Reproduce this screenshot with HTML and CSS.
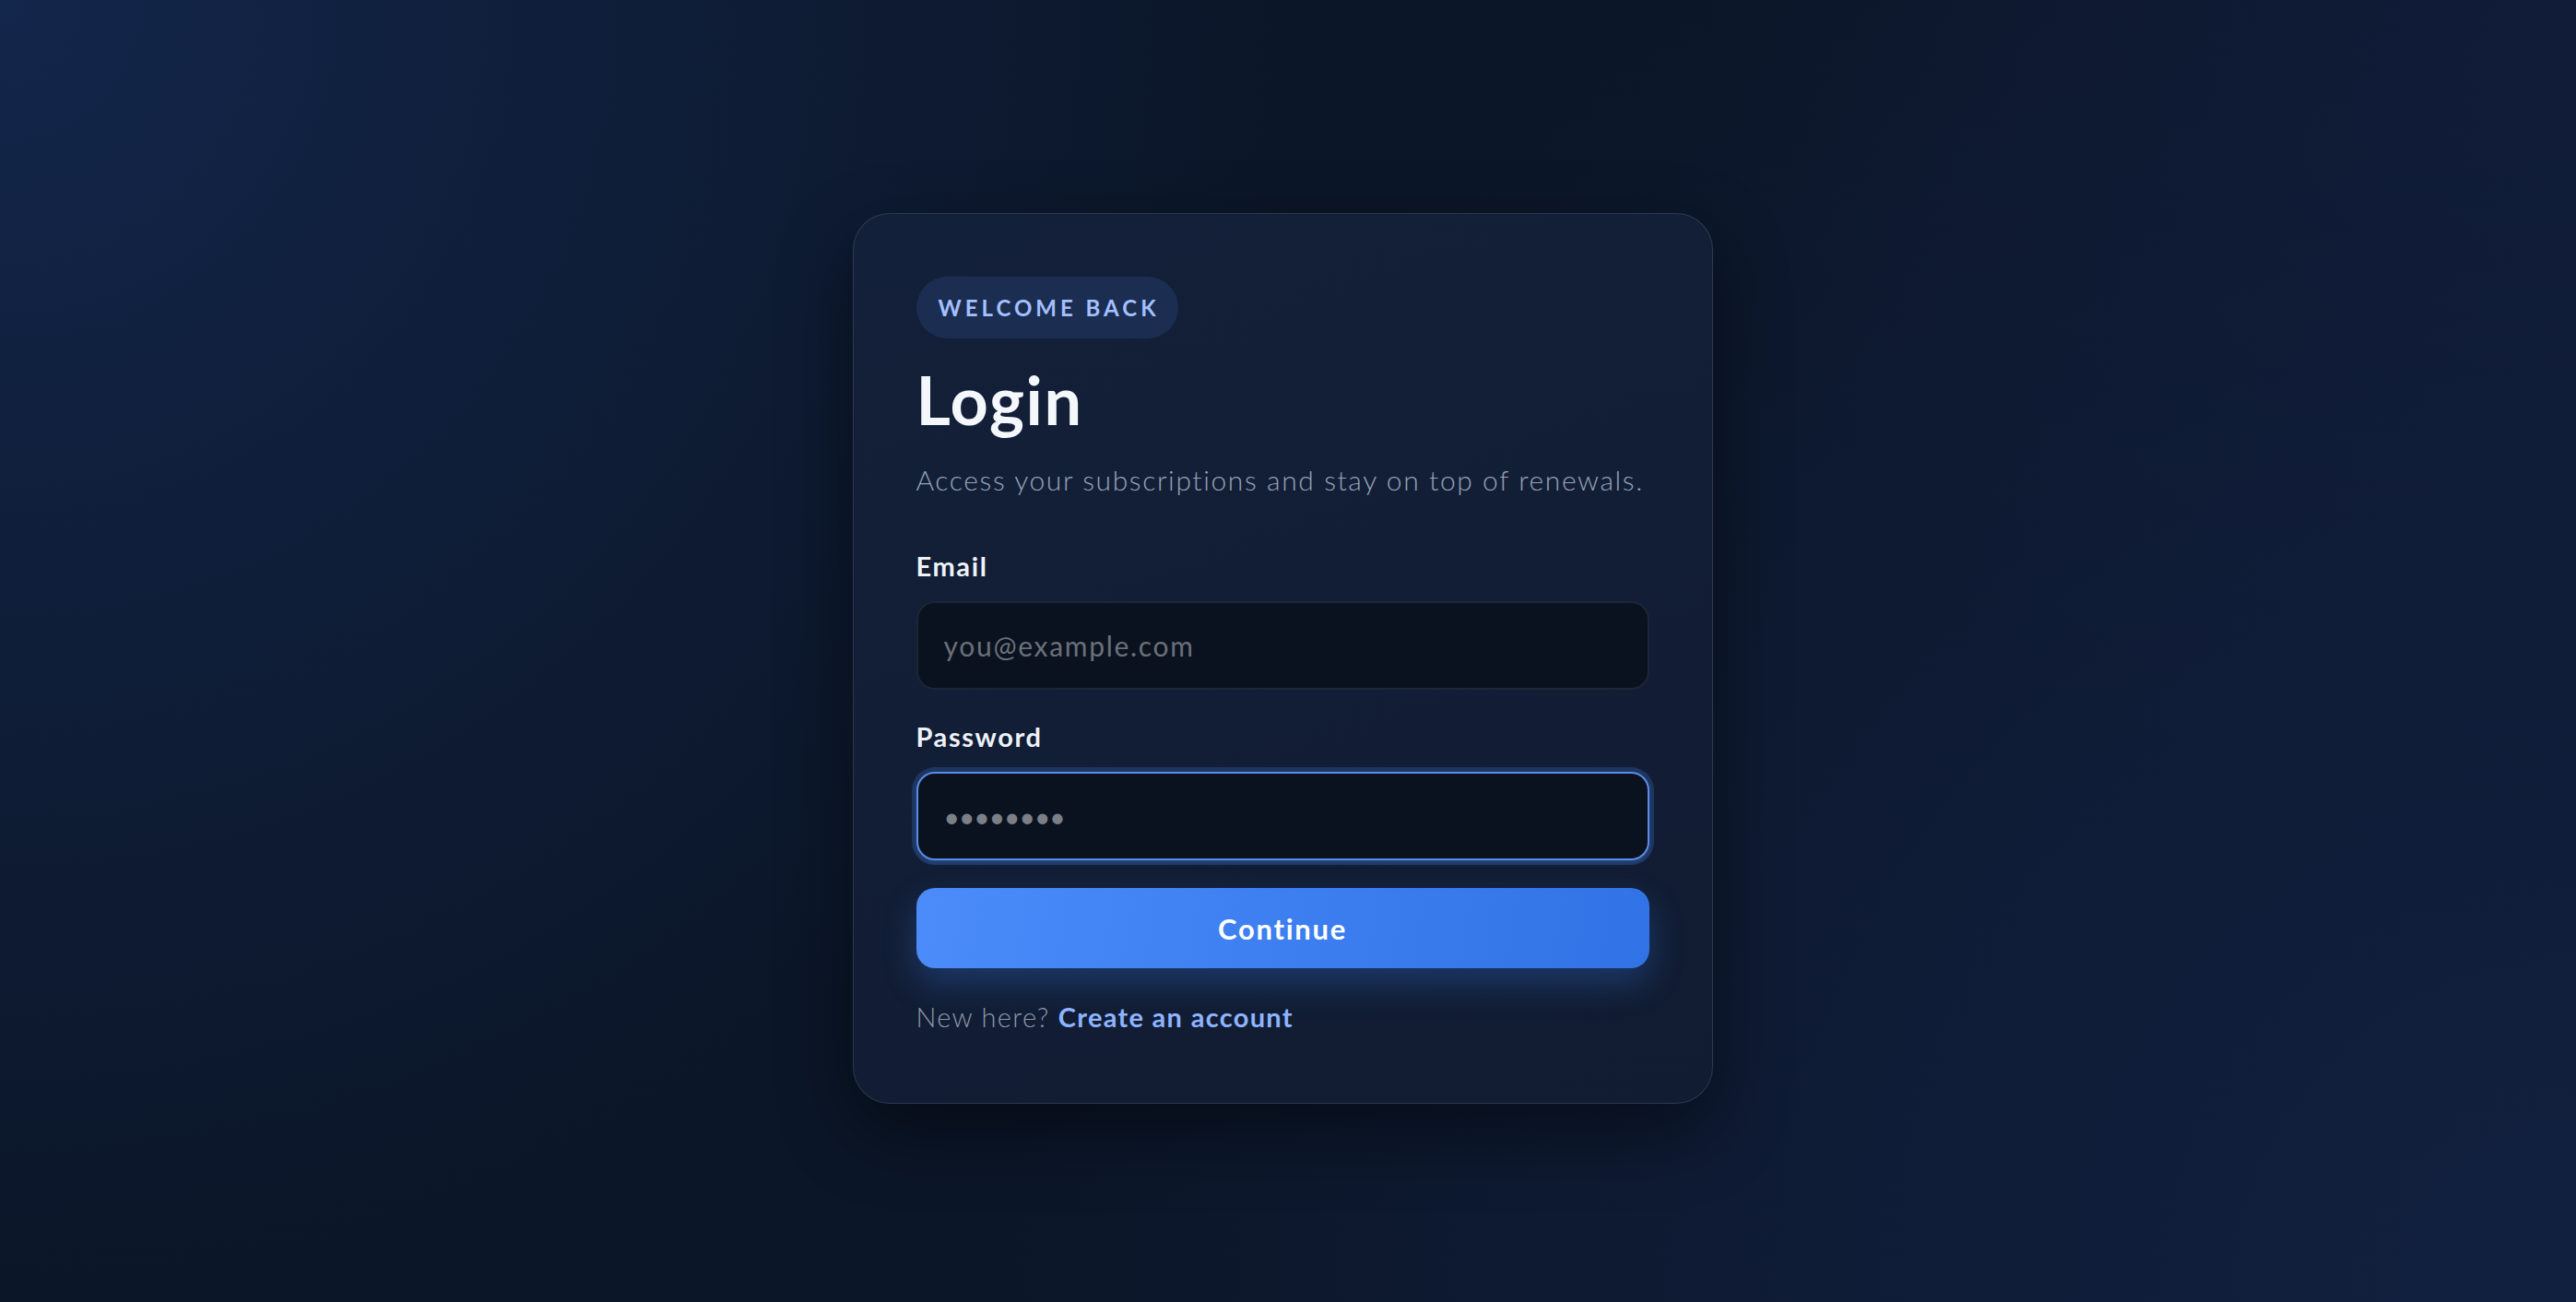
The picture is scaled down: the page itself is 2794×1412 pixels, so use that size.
FILE: index.html
```html
<!DOCTYPE html>
<html lang="en">
<head>
    <meta charset="UTF-8">
    <meta name="viewport" content="width=device-width, initial-scale=1.0">
    <title>Login</title>
    <link rel="stylesheet" href="styles.css">
</head>
<body>
    <div class="page">
        <form class="login-card" onsubmit="return false;">
            <span class="badge">Welcome back</span>
            <h1>Login</h1>
            <p class="subtitle">Access your subscriptions and stay on top of renewals.</p>

            <label class="field-label" for="email">Email</label>
            <input class="field" id="email" type="email" placeholder="you@example.com">

            <label class="field-label" for="password">Password</label>
            <input class="field focused" id="password" type="password" placeholder="&#8226;&#8226;&#8226;&#8226;&#8226;&#8226;&#8226;&#8226;">

            <button class="continue-button" type="submit">Continue</button>

            <p class="signup">New here? <a href="#">Create an account</a></p>
        </form>
    </div>
</body>
</html>
```

FILE: styles.css
```css
body {
    font-family: Lato, "Open Sans", sans-serif;
    margin: 0;
    padding: 0;
    background-color: #0b1628;
    background-image:
        radial-gradient(circle at 0 0, #13264b 0%, rgba(19, 38, 75, 0.55) 18%, rgba(11, 22, 40, 0) 45%),
        radial-gradient(circle at 100% 100%, #122040 0%, rgba(18, 32, 64, 0.6) 25%, rgba(11, 22, 40, 0) 55%),
        radial-gradient(circle at 100% 0, rgba(16, 28, 56, 0.9) 0%, rgba(11, 22, 40, 0) 30%);
    color: #e8edf5;
}
.page {
    min-height: 100vh;
    box-sizing: border-box;
    padding: 16px 12px 0 0;
    display: flex;
    align-items: center;
    justify-content: center;
}
.login-card {
    width: 795px;
    padding: 68px 68px 72px;
    display: flex;
    flex-direction: column;
    align-items: flex-start;
    border: 1px solid rgba(148, 163, 184, 0.2);
    border-radius: 40px;
    background: linear-gradient(160deg, #132039 0%, #111c32 100%);
    box-shadow: 0 30px 80px rgba(0, 0, 0, 0.45);
}
.badge {
    display: inline-block;
    height: 67px;
    line-height: 67px;
    padding: 0 20px 0 24px;
    border-radius: 34px;
    background-color: #1b2d51;
    color: #a3c0ff;
    font-size: 24px;
    font-weight: 700;
    letter-spacing: 4px;
    text-transform: uppercase;
}
h1 {
    margin: 27px 0 0;
    font-size: 72px;
    line-height: 1.1;
    font-weight: 700;
    letter-spacing: 1.5px;
    color: #f4f7fb;
}
.subtitle {
    margin: 24px 0 0;
    font-size: 30px;
    line-height: 1.5;
    font-weight: 300;
    letter-spacing: 1.6px;
    color: #97a3b6;
}
.field-label {
    margin-top: 53px;
    font-size: 29px;
    line-height: 1.25;
    font-weight: 700;
    letter-spacing: 1.6px;
    color: #eef2f8;
}
.field-label + .field {
    margin-top: 20px;
}
.field + .field-label {
    margin-top: 33px;
}
.field {
    width: 100%;
    height: 96px;
    box-sizing: border-box;
    padding: 0 28px;
    border: 2px solid #1c2637;
    border-radius: 20px;
    background-color: #0a1220;
    color: #e8edf5;
    font-family: inherit;
    font-size: 30px;
    letter-spacing: 1.7px;
    outline: none;
}
.field::placeholder {
    color: #6c7079;
}
.focused {
    border-color: #5a8de6;
    box-shadow: 0 0 0 5px rgba(59, 110, 200, 0.3), 0 3px 4px rgba(59, 110, 200, 0.25);
}
.focused::placeholder {
    color: #7b7f87;
    letter-spacing: -1px;
}
.continue-button {
    width: 100%;
    height: 87px;
    margin-top: 30px;
    border: none;
    border-radius: 20px;
    background: linear-gradient(100deg, #4b8cfa 0%, #3d7ff0 50%, #3172e6 100%);
    box-shadow: 0 16px 36px rgba(59, 130, 246, 0.28);
    color: #ffffff;
    font-family: inherit;
    font-size: 31px;
    font-weight: 700;
    letter-spacing: 1.7px;
    cursor: pointer;
}
.signup {
    margin: 33px 0 0;
    font-size: 29px;
    line-height: 1.4;
    font-weight: 300;
    letter-spacing: 1.3px;
    color: #8c98ab;
}
.signup a {
    color: #8fb4ff;
    font-weight: 700;
    text-decoration: none;
}
```
